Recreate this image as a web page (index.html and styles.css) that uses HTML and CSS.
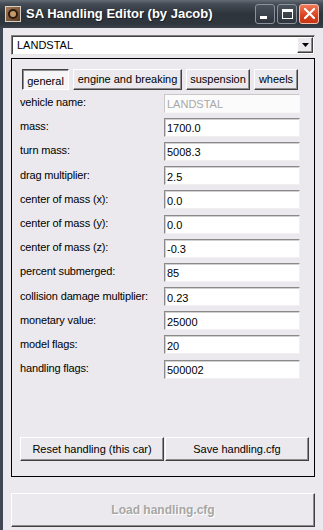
FILE: index.html
```html
<!DOCTYPE html>
<html lang="en">
<head>
    <meta charset="UTF-8">
    <meta name="viewport" content="width=device-width, initial-scale=1.0">
    <title>SA Handling Editor</title>
    <link rel="stylesheet" href="styles.css">
</head>
<body>

    <div class="window">
        <div class="titlebar">
            <span class="app-icon"><span class="wheel"></span></span>
            <span class="title">SA Handling Editor (by Jacob)</span>
            <div class="controls">
                <span class="ctl"><span class="min"></span></span>
                <span class="ctl"><span class="max"></span></span>
                <span class="ctl close">
                    <svg width="13" height="13" viewBox="0 0 13 13"><path d="M2 2 L11 11 M11 2 L2 11" stroke="#fff" stroke-width="2.2" stroke-linecap="round"/></svg>
                </span>
            </div>
        </div>

        <div class="client">
            <div class="combo">
                <span class="combo-text">LANDSTAL</span>
                <span class="combo-btn">
                    <svg width="7" height="4" viewBox="0 0 7 4"><path d="M0 0 H7 L3.5 4 Z" fill="#000"/></svg>
                </span>
            </div>

            <div class="panel">
                <div class="tabs">
                    <span class="tab active t-general">general</span>
                    <span class="tab t-engine">engine and breaking</span>
                    <span class="tab t-susp">suspension</span>
                    <span class="tab t-wheels">wheels</span>
                </div>

                <div class="rows">
                    <div class="row"><label>vehicle name:</label><input type="text" value="LANDSTAL" disabled></div>
                    <div class="row"><label>mass:</label><input type="text" value="1700.0"></div>
                    <div class="row"><label>turn mass:</label><input type="text" value="5008.3"></div>
                    <div class="row"><label>drag multiplier:</label><input type="text" value="2.5"></div>
                    <div class="row"><label>center of mass (x):</label><input type="text" value="0.0"></div>
                    <div class="row"><label>center of mass (y):</label><input type="text" value="0.0"></div>
                    <div class="row"><label>center of mass (z):</label><input type="text" value="-0.3"></div>
                    <div class="row"><label>percent submerged:</label><input type="text" value="85"></div>
                    <div class="row"><label>collision damage multiplier:</label><input type="text" value="0.23"></div>
                    <div class="row"><label>monetary value:</label><input type="text" value="25000"></div>
                    <div class="row"><label>model flags:</label><input type="text" value="20"></div>
                    <div class="row"><label>handling flags:</label><input type="text" value="500002"></div>
                </div>

                <div class="actions">
                    <button class="btn">Reset handling (this car)</button>
                    <button class="btn">Save handling.cfg</button>
                </div>
            </div>

            <button class="load" disabled>Load handling.cfg</button>
        </div>
    </div>

</body>
</html>
```

FILE: styles.css
```css
/* General Reset */
* { margin: 0; padding: 0; box-sizing: border-box; }
body {
    font-family: "Liberation Sans", Arial, sans-serif;
    font-size: 11px;
    color: #000;
    background: #ebe9ed;
    width: 323px;
    height: 530px;
    overflow: hidden;
}
.window {
    height: 530px;
    border-left: 3px solid #3e4753;
    background: #ebe9ed;
}

/* title bar */
.titlebar {
    height: 28px;
    margin-left: -3px;
    display: flex;
    align-items: center;
    padding-left: 5px;
    padding-bottom: 1px;
    background: linear-gradient(#646c76 0, #444b54 4px, #2e343c 14px, #30363e 24px, #3c434c 28px);
}
.app-icon {
    width: 16px; height: 16px;
    background: linear-gradient(135deg, #a57a55, #5a3a22);
    border: 1px solid #d8d0c4;
    display: flex; align-items: center; justify-content: center;
}
.wheel {
    width: 10px; height: 10px; border-radius: 50%;
    border: 2px solid #2a1a10;
    background: #c49a6a;
}
.title {
    color: #fff;
    font-weight: bold;
    font-size: 13px;
    margin-left: 5px;
    flex: 1;
    text-shadow: 1px 1px 0 #1a1e24;
}
.controls { display: flex; gap: 2px; padding-right: 4px; }
.ctl {
    width: 20px; height: 20px;
    border: 1px solid #8c939c;
    border-radius: 3px;
    background: linear-gradient(#4a525c, #2e343c);
    display: flex; align-items: center; justify-content: center;
}
.min { width: 7px; height: 3px; background: #fff; margin-top: 8px; margin-left: -4px; }
.max { width: 11px; height: 10px; border: 1px solid #fff; border-top-width: 3px; }
.ctl.close {
    border-color: #f3c0b0;
    background: linear-gradient(#f07a5a, #d8401e 60%, #c83414);
}

/* client area */
.client {
    padding: 7px 0 0 8px;
    display: flex;
    flex-direction: column;
}
.combo {
    width: 304px; height: 20px;
    background: #fff;
    border: 1px solid #7f7f7f;
    border-right-color: #e6e6e6;
    border-bottom-color: #e6e6e6;
    box-shadow: inset 1px 1px 0 #404040;
    display: flex; align-items: center;
    padding: 0 1px 0 5px;
}
.combo-text { flex: 1; }
.combo-btn {
    width: 16px; height: 16px;
    background: #ebe9ed;
    border: 1px solid #fff;
    border-right-color: #404040;
    border-bottom-color: #404040;
    box-shadow: inset -1px -1px 0 #8a8a8a;
    display: flex; align-items: center; justify-content: center;
}

.panel {
    width: 304px; height: 419px;
    margin-top: 3px;
    border: 1px solid #000;
    display: flex;
    flex-direction: column;
    padding: 10px 0 15px 8px;
}
.tabs { display: flex; gap: 4px; padding-left: 2px; height: 21px; }
.tab {
    height: 21px;
    white-space: nowrap;
    text-align: center;
    line-height: 19px;
    font-size: 11px;
    border: 1px solid #fff;
    border-right-color: #404040;
    border-bottom-color: #404040;
    box-shadow: inset -1px -1px 0 #8e8e8e;
}
.t-general { width: 47px; }
.t-engine { width: 109px; }
.t-susp { width: 64px; }
.t-wheels { width: 44px; }
.tab.active {
    background: #f5f4f7;
    border-color: #404040;
    border-right-color: #fff;
    border-bottom-color: #fff;
    box-shadow: inset 1px 1px 0 #8e8e8e;
    padding-top: 2px;
}

.rows { margin-top: 1px; }
.row {
    height: 24.2px;
    display: flex;
    align-items: center;
}
.row label { width: 144px; letter-spacing: -0.15px; padding-bottom: 2px; }
.row input {
    width: 136px; height: 19px;
    font-family: "Liberation Sans", Arial, sans-serif;
    font-size: 11px;
    padding: 2px 0 0 2px;
    background: #fff;
    border: 1px solid #8a8a8a;
    border-right-color: #f0f0f0;
    border-bottom-color: #f0f0f0;
    box-shadow: inset 1px 1px 0 #d0d0d0;
    outline: none;
    color: #000;
}
.row input:disabled {
    color: #a8a8a8;
    background: #fbfbfb;
    border-color: #c8c8c8;
    border-right-color: #f8f8f8;
    border-bottom-color: #f8f8f8;
    box-shadow: none;
}

.actions { margin-top: auto; display: flex; }
.btn {
    width: 144px; height: 24px;
    background: #ebe9ed;
    font-family: "Liberation Sans", Arial, sans-serif;
    font-size: 11px;
    color: #000;
    border: 1px solid #fff;
    border-right-color: #404040;
    border-bottom-color: #404040;
    box-shadow: inset -1px -1px 0 #8e8e8e;
}
.btn + .btn { margin-left: 1px; }

.load {
    width: 304px; height: 34px;
    margin-top: 16px;
    background: #ebe9ed;
    font-family: "Liberation Sans", Arial, sans-serif;
    font-size: 12px;
    font-weight: bold;
    color: #a6a6a6;
    text-shadow: 1px 1px 0 #fff;
    border: 1px solid #fff;
    border-right-color: #404040;
    border-bottom-color: #404040;
    box-shadow: inset -1px -1px 0 #8e8e8e;
}
```
